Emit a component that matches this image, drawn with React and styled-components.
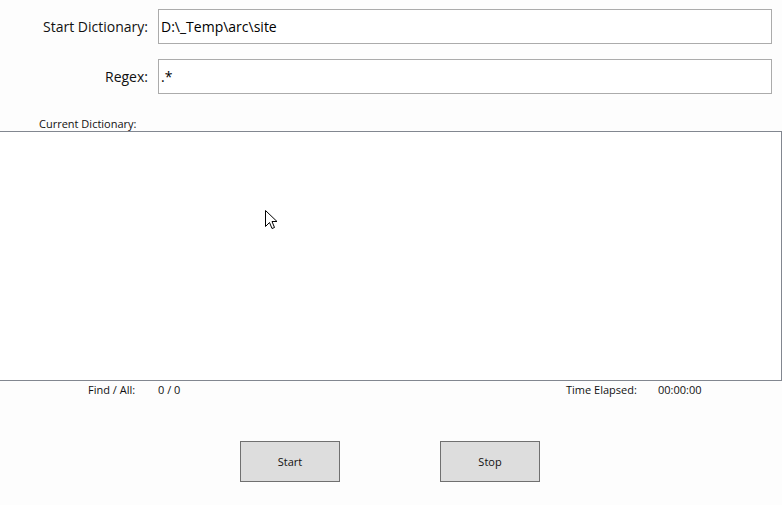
import React from "react";
import styled, { createGlobalStyle } from "styled-components";

const Global = createGlobalStyle`
  html, body { margin: 0; padding: 0; background: #fdfdfd; overflow: hidden; }
  body { font-family: "Open Sans", "Noto Sans", sans-serif; color: #000; }
`;

const Page = styled.div`
  position: relative;
  width: 782px;
  height: 505px;
  display: flex;
  flex-direction: column;
`;

const Form = styled.div`
  display: grid;
  grid-template-columns: 158px 614px;
  row-gap: 15px;
  padding-top: 9px;
`;

const Label = styled.label`
  font-size: 14px;
  text-align: right;
  padding-right: 10px;
  align-self: center;
  line-height: 35px;
  color: #111;
`;

const Field = styled.div`
  height: 35px;
  box-sizing: border-box;
  border: 1px solid #ababab;
  background: #fff;
  font-size: 14px;
  padding-left: 2px;
  line-height: 33px;
  white-space: pre;
`;

const SmallLabel = styled.div`
  font-size: 11px;
  padding-left: 39px;
  margin-top: 23px;
  line-height: 14px;
  height: 14px;
  color: #111;
`;

const ListBox = styled.div`
  margin-left: -1px;
  width: 783px;
  height: 250px;
  box-sizing: border-box;
  border: 1px solid #828790;
  background: #fff;
`;

const Status = styled.div`
  display: grid;
  grid-template-columns: 88px 70px 408px 92px 1fr;
  font-size: 11px;
  line-height: 18px;
  color: #111;
`;

const Cell = styled.span`
  grid-column: ${(p) => p.col};
`;

const Buttons = styled.div`
  display: flex;
  gap: 100px;
  padding-left: 240px;
  margin-top: 42px;
`;

const Button = styled.button`
  width: 100px;
  height: 41px;
  box-sizing: border-box;
  border: 1px solid #707070;
  background: #dddddd;
  font-family: "Open Sans", "Noto Sans", sans-serif;
  font-size: 11px;
  color: #111;
  padding: 0;
`;

const Cursor = styled.svg`
  position: absolute;
  left: 265px;
  top: 210px;
`;

export default function App() {
  return (
    <Page>
      <Global />
      <Form>
        <Label>Start Dictionary:</Label>
        <Field>D:\_Temp\arc\site</Field>
        <Label>Regex:</Label>
        <Field>.*</Field>
      </Form>
      <SmallLabel>Current Dictionary:</SmallLabel>
      <ListBox />
      <Status>
        <Cell col={2}>Find / All:</Cell>
        <Cell col={3}>0 / 0</Cell>
        <Cell col={4}>Time Elapsed:</Cell>
        <Cell col={5}>00:00:00</Cell>
      </Status>
      <Buttons>
        <Button>Start</Button>
        <Button>Stop</Button>
      </Buttons>
      <Cursor width="13" height="21" viewBox="0 0 13 21">
        <path
          d="M0.5 0.5 L0.5 16.5 L4.5 12.5 L7 18.5 L9.5 17.5 L7 11.5 L12 11.5 Z"
          fill="#fff"
          stroke="#000"
          strokeWidth="1"
        />
      </Cursor>
    </Page>
  );
}
